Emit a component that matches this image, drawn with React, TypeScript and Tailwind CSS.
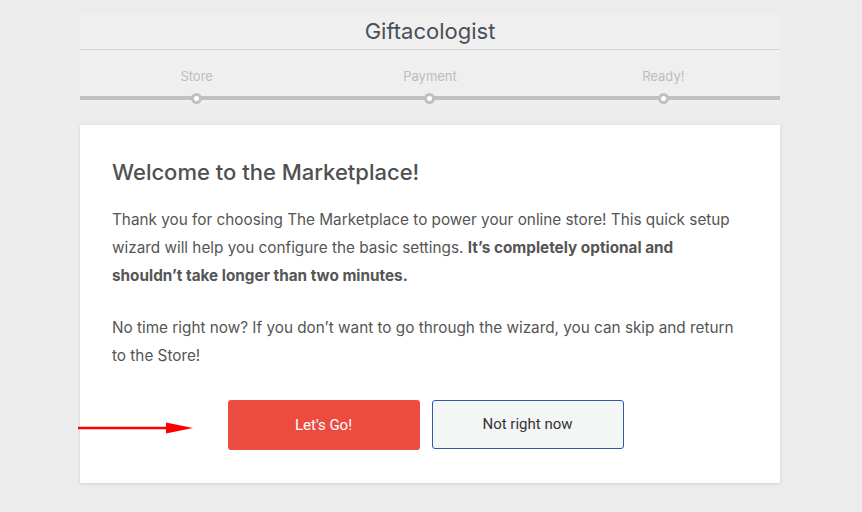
export default function App() {
    const steps = ["Store", "Payment", "Ready!"]
    return (
        <div className="min-h-[512px] w-full bg-[#ececec] pt-[14px] font-['Inter','Liberation_Sans',sans-serif] relative">
            <div className="ml-[80px] w-[700px] bg-[#efefef]">
                <h1 className="h-[36px] flex items-center justify-center text-[22px] text-[#4a4f57] border-b border-[#d4d4d4]">
                    Giftacologist
                </h1>
                <div className="relative h-[55px]">
                    <div className="grid grid-cols-3 pt-[18px]">
                        {steps.map((s) => (
                            <div key={s} className="text-center text-[13px] leading-[16px] text-[#bdbdbd]">{s}</div>
                        ))}
                    </div>
                    <div className="absolute left-0 right-0 top-[46px] h-[4px] bg-[#c0c0c0]" />
                    <div className="absolute left-0 right-0 top-[43px] grid grid-cols-3">
                        {steps.map((s) => (
                            <div key={s} className="flex justify-center">
                                <span className="w-[11px] h-[11px] rounded-full bg-[#c0c0c0] flex items-center justify-center">
                                    <span className="w-[5px] h-[5px] rounded-full bg-white" />
                                </span>
                            </div>
                        ))}
                    </div>
                </div>
            </div>
            <div className="ml-[80px] mt-[20px] w-[700px] bg-white shadow-[0_1px_3px_rgba(0,0,0,0.12)] pl-[32px] pr-[41px] pt-[30px] pb-[33px] text-[#555]">
                <h2 className="text-[22px] leading-[34px] font-medium text-[#505050]">Welcome to the Marketplace!</h2>
                <p className="mt-[17px] text-[15.3px] leading-[28px]">
                    Thank you for choosing The Marketplace to power your online store! This quick setup wizard will help you configure the basic settings. <strong className="font-bold">It’s completely optional and shouldn’t take longer than two minutes.</strong>
                </p>
                <p className="mt-[24px] text-[15.3px] leading-[28px]">
                    No time right now? If you don’t want to go through the wizard, you can skip and return to the Store!
                </p>
                <div className="mt-[30px] flex justify-center gap-[12px]">
                    <button className="w-[192px] h-[50px] rounded-[3px] bg-[#ec4b3f] text-white text-[15px] font-['Roboto',sans-serif]">Let's Go!</button>
                    <button className="w-[192px] h-[49px] rounded-[3px] bg-[#f4f5f5] border border-[#2a5d9f] text-[#333] text-[15px] font-['Roboto',sans-serif]">Not right now</button>
                </div>
            </div>
            <svg className="absolute left-[78px] top-[421px]" width="116" height="14" viewBox="0 0 116 14">
                <line x1="0" y1="7" x2="92" y2="7" stroke="#ff0000" strokeWidth="2.5" />
                <polygon points="88,1.5 115,7 88,12.5" fill="#ff0000" />
            </svg>
        </div>
    )
}
